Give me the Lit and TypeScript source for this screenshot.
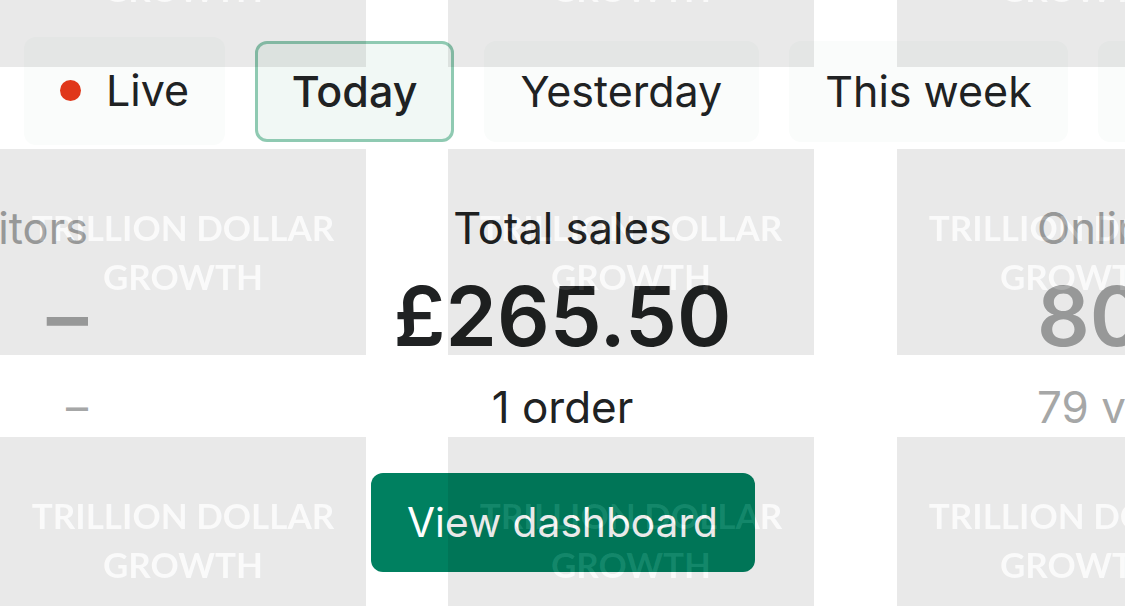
import { LitElement, html, svg, css } from "lit";
import { customElement } from "lit/decorators.js";

@customElement("app-root")
export class AppRoot extends LitElement {
  static styles = css`
    :host {
      display: block;
      position: relative;
      width: 1125px;
      height: 606px;
      overflow: hidden;
      background: #fff;
      font-family: Inter, "Liberation Sans", sans-serif;
      color: #202223;
    }
    .chips {
      display: flex;
      align-items: center;
      gap: 30px;
      padding: 37px 0 0 24px;
      height: 108px;
      box-sizing: content-box;
      overflow: hidden;
    }
    .chip {
      flex: none;
      box-sizing: border-box;
      height: 101px;
      border-radius: 12px;
      background: #fafcfb;
      font-size: 43px;
      display: flex;
      align-items: center;
      padding: 0 36.5px;
      white-space: nowrap;
    }
    .chip.live { height: 108px; gap: 25px; padding: 0 36px 2px 36px; }
    .dot { width: 21px; height: 21px; border-radius: 50%; background: #e0371a; }
    .chip.on {
      background: #f1f8f5;
      border: 3px solid #8fcab2;
      font-weight: 500;
      padding: 0 33.5px;
    }
    .metrics {
      display: grid;
      grid-template-columns: 88px 949px 88px;
      margin-top: 55px;
    }
    .metric {
      display: flex;
      flex-direction: column;
      align-items: center;
      white-space: nowrap;
      min-width: 0;
    }
    .metric.dim { color: #a6a7a7; }
    .metric.left { align-items: flex-end; }
    .metric.right { align-items: flex-start; }
    .label { font-size: 43.5px; line-height: 56px; }
    .value { font-size: 82.5px; line-height: 100px; font-weight: 600; margin-top: 10px; }
    .sub { font-size: 44px; line-height: 56px; margin-top: 13px; }
    .action { display: flex; justify-content: center; margin-top: 38px; }
    .btn {
      box-sizing: border-box;
      width: 384px;
      height: 99px;
      border-radius: 12px;
      background: #008060;
      color: #fff;
      font-size: 40.7px;
      display: flex;
      align-items: center;
      justify-content: center;
    }
    .wm {
      position: absolute;
      left: -0.5px;
      top: -139px;
      display: grid;
      grid-template-columns: repeat(3, 366px);
      grid-auto-rows: 206px;
      column-gap: 82.5px;
      row-gap: 82px;
      pointer-events: none;
    }
    .tile { display: block; width: 366px; height: 206px; }
    .tile text {
      font-family: Lato, sans-serif;
      font-weight: 700;
      font-size: 35px;
      text-anchor: middle;
    }
  `;

  private tile(i: number) {
    const words = svg`
      <text x="183" y="92">TRILLION DOLLAR</text>
      <text x="183" y="141">GROWTH</text>`;
    return html`<svg class="tile" viewBox="0 0 366 206">
      <defs>
        <mask id=${`m${i}`} maskUnits="userSpaceOnUse" x="0" y="0" width="366" height="206">
          <rect width="366" height="206" fill="#fff"></rect>
          <g fill="#000">${words}</g>
        </mask>
      </defs>
      <rect width="366" height="206" fill="#000" fill-opacity="0.085" mask=${`url(#m${i})`}></rect>
      <g fill="#ccc" fill-opacity="0.1">${words}</g>
    </svg>`;
  }

  render() {
    return html`
      <div class="chips">
        <div class="chip live"><span class="dot"></span>Live</div>
        <div class="chip on">Today</div>
        <div class="chip">Yesterday</div>
        <div class="chip">This week</div>
        <div class="chip">This month</div>
      </div>
      <div class="metrics">
        <div class="metric dim left">
          <div class="label">Total visitors</div>
          <div class="value">–</div>
          <div class="sub">–</div>
        </div>
        <div class="metric">
          <div class="label">Total sales</div>
          <div class="value">£265.50</div>
          <div class="sub">1 order</div>
        </div>
        <div class="metric dim right">
          <div class="label">Online visitors</div>
          <div class="value">80</div>
          <div class="sub">79 visitors</div>
        </div>
      </div>
      <div class="action"><div class="btn">View dashboard</div></div>
      <div class="wm" aria-hidden="true">
        ${Array.from({ length: 9 }, (_, i) => this.tile(i))}
      </div>
    `;
  }
}
